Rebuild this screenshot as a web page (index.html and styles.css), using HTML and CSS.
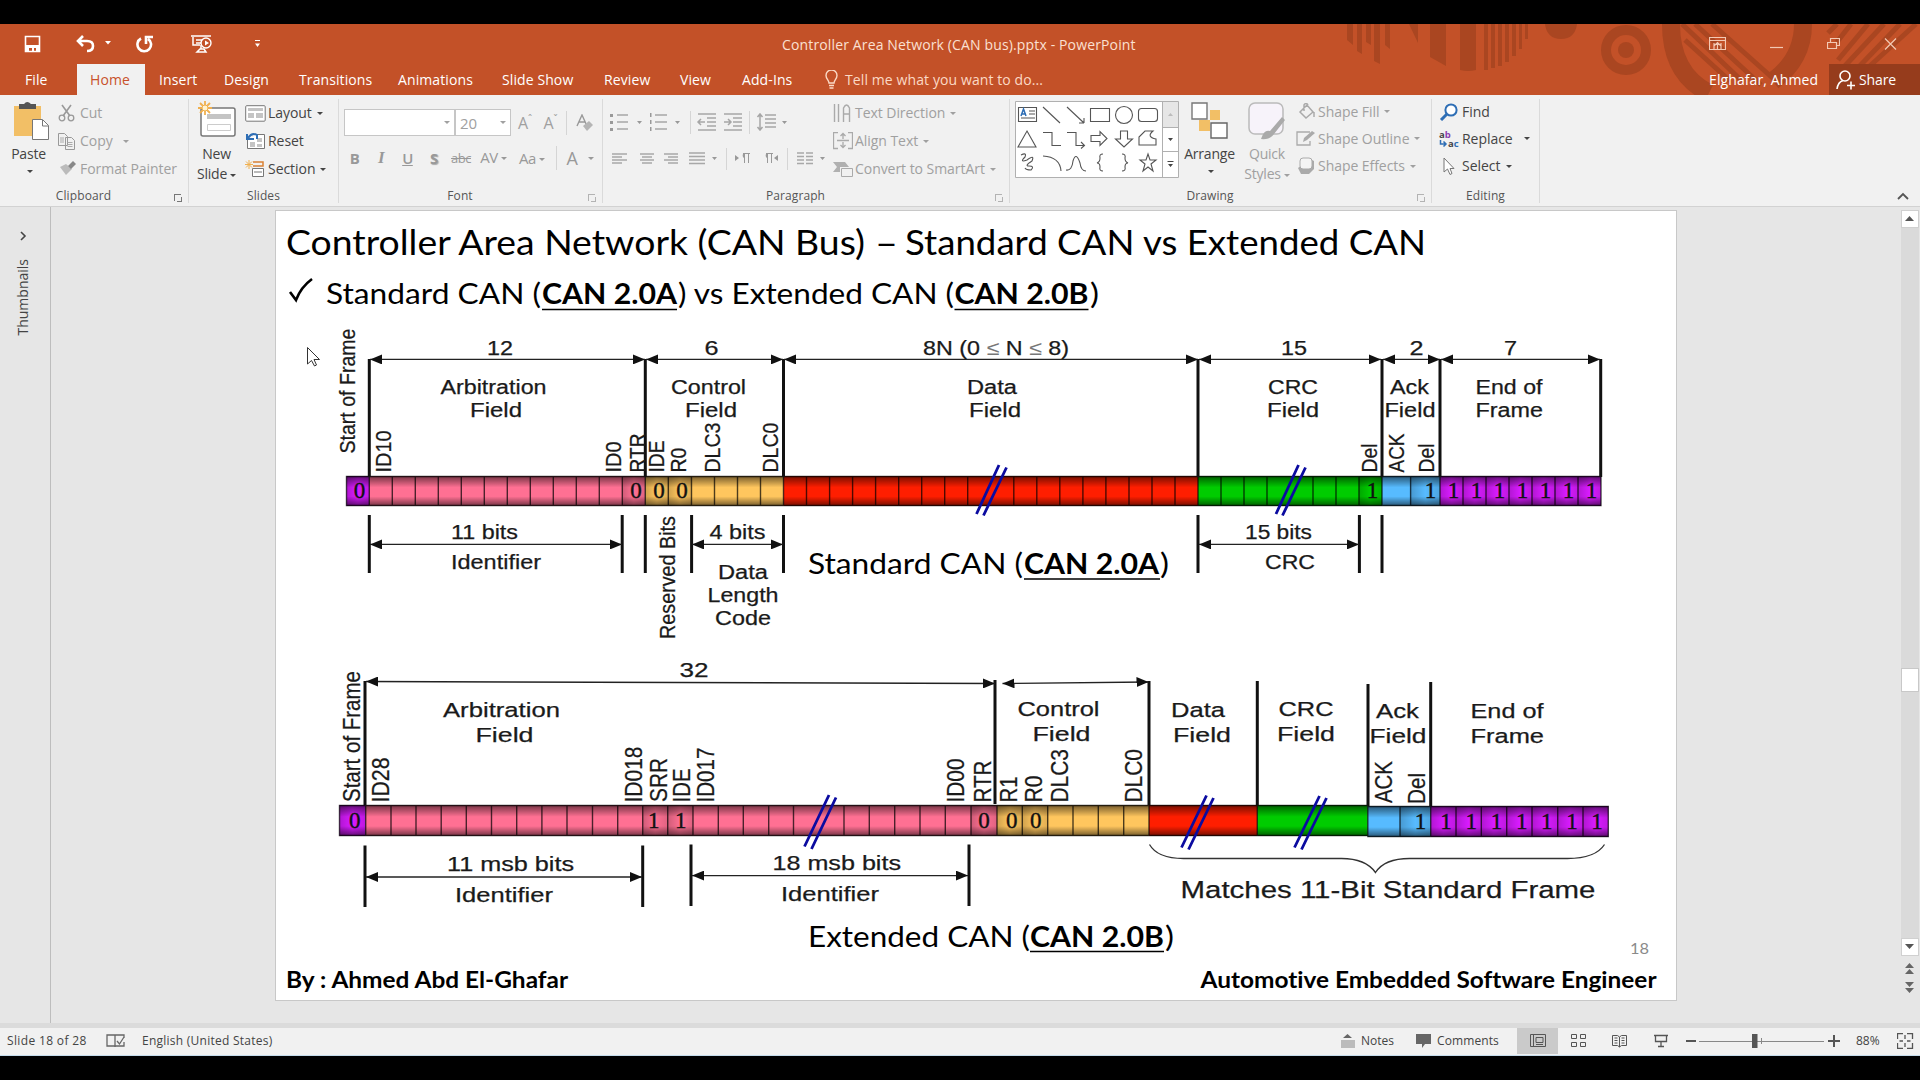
FILE: index.html
```html
<!DOCTYPE html>
<html lang="en">
<head>
<meta charset="utf-8">
<title>Controller Area Network (CAN bus).pptx - PowerPoint</title>
<link rel="stylesheet" href="styles.css">
</head>
<body>
<div class="window">
<header class="titlebar">
  <svg class="deco" width="600" height="71" viewBox="1320 24 600 71">
    <g fill="#aa4621">
      <path d="M1347 24h6v21l-6-5zM1357 24h5v30l-5-3zM1366 24h5v21l-5-3zM1374 24h6v40l-6-3zM1385 24h5v25l-5-4zM1409 24h9v19zM1430 24h16v42l-16-9zM1460 24h16v46q-8 2-16 0zM1484 24h4v46h-4zM1491 24h4v44h-4zM1498 24h4v42h-4zM1505 24h4v38h-4zM1512 24h4v32h-4zM1519 24h3v25h-3zM1525 24h3v15h-3z"/>
      <path d="M1545 24h32q-2 15-16 15t-16-15z"/><circle cx="1626" cy="50" r="8"/>
    </g>
    <circle cx="1626" cy="50" r="20" fill="none" stroke="#aa4621" stroke-width="10"/>
    <path d="M1671 24q0 50 38 69M1803 24q0 35-30 57" fill="none" stroke="#aa4621" stroke-width="18"/>
    <path d="M1682 24l60 57M1695 24l66 61M1712 24l64 57M1685 40l45 41M1837 24l-9 9M1851 24l-14 18M1868 24l-30 36M1884 24l-42 45M1900 24l-48 50M1916 24l-55 50" stroke="#aa4621" stroke-width="5"/>
  </svg>
  <div class="caption">
    <div class="qat">
      <svg width="18" height="18" viewBox="0 0 18 18"><path d="M1.500 1.500h14v15h-14z" fill="none" stroke="#fff" stroke-width="1.600"/><path d="M2 10h13v6h-3v-3h-2v3h-2v-3h-3v3h-3z" fill="#fff"/></svg>
      <svg width="40" height="18" viewBox="0 0 40 18"><path d="M7 1L2 6l5 5M3 6h8q6 0 6 5t-6 5" fill="none" stroke="#fff" stroke-width="2.600"/><path d="M29 6h6l-3 3.500z" fill="#fff"/></svg>
      <svg width="18" height="18" viewBox="0 0 18 18"><path d="M5 3.500A6.800 6.800 0 1 0 12 3.800M10 9V2h7" fill="none" stroke="#fff" stroke-width="2.600"/></svg>
      <svg width="22" height="20" viewBox="0 0 22 20"><path d="M0 2h20M2 3v8h7M5 6h6v3H5M10 11v4M6 18h9l-2-3H9z" fill="none" stroke="#fff" stroke-width="1.500"/><circle cx="15" cy="9" r="5" fill="#c35128" stroke="#fff" stroke-width="1.400"/><path d="M14 6.500v5l4-2.500z" fill="#fff"/></svg>
      <svg width="8" height="10" viewBox="0 0 8 10"><path d="M1 1.500h5" stroke="#fff"/><path d="M1 4.500h5L3.500 8z" fill="#fff"/></svg>
    </div>
    <div class="doc-title">Controller Area Network (CAN bus).pptx - PowerPoint</div>
    <div class="win-buttons">
      <svg width="17" height="14" viewBox="0 0 17 14"><path d="M.5.5h16v12H.5zM.5 3.500h16M8.500 12V6M5.500 8.500l3-3 3 3M5 6v6M12 6v6"/></svg>
      <svg width="13" height="14" viewBox="0 0 13 14"><path d="M0 10.500h13"/></svg>
      <svg width="13" height="14" viewBox="0 0 13 14"><path d="M.5 5.500h9v6h-9zM3.500 5V1.500h9v7H10"/></svg>
      <svg width="13" height="14" viewBox="0 0 13 14"><path d="M1 1.500l11 11M12 1.500l-11 11"/></svg>
    </div>
  </div>
  <nav class="tabs">
    <span class="tab file">File</span><span class="tab active">Home</span><span class="tab w65">Insert</span><span class="tab w75">Design</span><span class="tab w99">Transitions</span><span class="tab w104">Animations</span><span class="tab w102">Slide Show</span><span class="tab w76">Review</span><span class="tab w61">View</span><span class="tab w82">Add-Ins</span>
    <span class="tell"><svg width="14" height="19" viewBox="0 0 14 19"><path d="M4 13c0-3-3-4-3-7.500a5.500 5.500 0 0 1 11 0C12 9 9 10 9 13zM4 15.500h5M4.500 18h4" fill="none" stroke="#fbd9c5" stroke-width="1.400"/></svg>Tell me what you want to do...</span>
    <span class="user">Elghafar, Ahmed</span>
    <span class="share"><svg width="20" height="20" viewBox="0 0 20 20"><circle cx="9" cy="6" r="5" fill="none" stroke="#fff" stroke-width="1.600"/><path d="M1 19q1-7 6-8.500M11 15.500h8M15 11.500v8" fill="none" stroke="#fff" stroke-width="1.600"/></svg>Share</span>
  </nav>
</header>

<section class="ribbon">
  <div class="group clipboard">
    <div class="body">
      <div class="big dark"><svg width="36" height="38" viewBox="0 0 36 38"><path d="M0 4h27v30H0z" fill="#f2bf66"/><path d="M5 7V2h5q3-4 7 0h5v5z" fill="#555"/><path d="M18.500 17.500h10l6 6v14h-16z" fill="#fff" stroke="#777"/><path d="M28.500 18v6h6" fill="none" stroke="#777"/></svg><span>Paste</span><i class="caret"></i></div>
      <div class="stack">
        <div class="cmd"><svg width="20" height="18" viewBox="0 0 20 18"><path d="M4 1l8 11M13 1L5 12" stroke="#999" stroke-width="1.600"/><circle cx="4" cy="14" r="2.800" fill="none" stroke="#999" stroke-width="1.300"/><circle cx="13" cy="14" r="2.800" fill="none" stroke="#999" stroke-width="1.300"/></svg>Cut</div>
        <div class="cmd"><svg width="20" height="18" viewBox="0 0 20 18"><path d="M.5 1.500h6l3 3v9h-9zM7.500 5.500h6l3 3v9h-9z" fill="#f1f1f1" stroke="#999"/><path d="M2 6h4M2 8h4M2 10h4M9.500 10.500h5M9.500 12.500h5M9.500 14.500h5" stroke="#aaa"/></svg>Copy<i class="caret far"></i></div>
        <div class="cmd"><svg width="20" height="18" viewBox="0 0 20 18"><path d="M2 7l6-3 6 5-6 6z" fill="#bbb"/><path d="M10 6l5-5 3 3-5 5z" fill="#888"/></svg>Format Painter</div>
      </div>
    </div>
    <div class="name with-launch">Clipboard<i class="launch"></i></div>
  </div>
  <div class="group slides">
    <div class="body">
      <div class="big dark"><svg width="40" height="38" viewBox="0 0 40 38"><rect x="4" y="8" width="34" height="28" rx="2" fill="#fff" stroke="#777" stroke-width="1.500"/><path d="M10 14h24v5H10z" fill="#c4c4c4"/><path d="M10.500 24.500h23v6h-23z" fill="none" stroke="#ccc"/><path d="M8 1v14M1 8h14M3 3l10 10M13 3L3 13" stroke="#f0b04f" stroke-width="1.800"/><circle cx="8" cy="8" r="3" fill="#fff3d0" stroke="#f0b04f"/></svg><span>New</span><span>Slide<i class="caret"></i></span></div>
      <div class="stack dark">
        <div class="cmd"><svg width="21" height="17" viewBox="0 0 21 17"><rect x=".7" y=".7" width="19.500" height="15.500" rx="1" fill="#fff" stroke="#777"/><path d="M3 3h15v3H3zM3 8h6v5H3zM11 8h7v5h-7z" fill="#c4c4c4"/></svg>Layout<i class="caret"></i></div>
        <div class="cmd"><svg width="21" height="18" viewBox="0 0 21 18"><path d="M2.500 8v8.500h17v-14H12" fill="#fff" stroke="#777"/><path d="M5 10h5v5H5zM12 6h5v4h-5zM12 12h5v3h-5z" fill="#c4c4c4"/><path d="M2 8V2M2 7h7M3 6q4-6 9-3v4" fill="none" stroke="#2e6eb5" stroke-width="2"/></svg>Reset</div>
        <div class="cmd"><svg width="21" height="18" viewBox="0 0 21 18"><path d="M8 2h10v4H8" fill="none" stroke="#d98032" stroke-width="1.500"/><path d="M7.500 8.500h11v8h-11zM9 12h8" fill="#fff" stroke="#777"/><path d="M4 0v9M0 4.500h8M1 1.500l6 6M7 1.500l-6 6" stroke="#f0b04f"/></svg>Section<i class="caret"></i></div>
      </div>
    </div>
    <div class="name">Slides</div>
  </div>
  <div class="group font">
    <div class="body rows">
      <div class="frow1"><span class="combo wide"><i class="caret"></i></span><span class="combo">20<i class="caret"></i></span><span class="gl">A<sup>ˆ</sup></span><span class="gl">A<sup>ˇ</sup></span><i class="sep"></i><svg width="18" height="18" viewBox="0 0 18 18"><path d="M1 12L6 1l5 11M3 8h6" fill="none" stroke="#999" stroke-width="1.400"/><path d="M7 12l6-5 4 4-6 6z" fill="#b5b5b5"/></svg></div>
      <div class="frow2"><b>B</b><em>I</em><u>U</u><b class="shadow">S</b><s>abc</s><span class="av">AV<i class="caret"></i></span><span>Aa<i class="caret"></i></span><i class="sep"></i><span class="fc">A</span><i class="caret"></i></div>
    </div>
    <div class="name with-launch">Font<i class="launch pale"></i></div>
  </div>
  <div class="group para">
    <div class="body">
      <div class="rows">
        <svg class="prow" width="218" height="26" viewBox="608 109 218 26"><g stroke="#a6a6a6" stroke-width="1.500" fill="none"><path d="M617 115h11M617 122h11M617 129h11M655 115h12M655 122h12M655 129h12M698 114h18M707 118h9M707 122h9M707 126h9M698 130h18M724 114h18M733 118h9M733 122h9M733 126h9M724 130h18M765 115h11M765 119h11M765 123h11M765 127h11M760 115v14M757.500 117l2.500-3 2.500 3M757.500 127l2.500 3 2.500-3M705 122h-7M701 119l-3 3 3 3M724 122h7M728 119l3 3-3 3"/></g><path d="M610 114h3v3h-3zM610 121h3v3h-3zM610 128h3v3h-3zM650 113h1.500v4H650zM650 120h1.500v4H650zM650 127h1.500v4H650zM637 121h5l-2.500 3zM675 121h5l-2.500 3zM782 121h5l-2.500 3z" fill="#999"/><path d="M690.500 111v23M749.500 111v23" stroke="#d5d5d5"/></svg>
        <svg class="prow" width="218" height="26" viewBox="608 146 218 26"><path d="M612 154h15M612 157h10M612 160h15M612 163h10M640 154h14M642 157h10M640 160h14M642 163h10M664 154h14M668 157h10M664 160h14M668 163h10M689 153h16M689 156.500h16M689 160h16M689 163.500h16M797 153h7M797 156.500h7M797 160h7M797 163.500h7M806 153h7M806 156.500h7M806 160h7M806 163.500h7" stroke="#a8a8a8" stroke-width="1.500"/><path d="M735 155v6l4-3zM778 155v6l-4-3zM712 157h5l-2.500 3zM820 157h5l-2.500 3zM744 153v5a3 3 0 0 1 0-5zM767 153v5a3 3 0 0 1 0-5z" fill="#999"/><path d="M744.500 153v10M748.500 153v10M743 153.500h7M767.500 153v10M771.500 153v10M766 153.500h7" stroke="#999"/><path d="M726.500 148v22M787.500 148v22" stroke="#d5d5d5"/></svg>
      </div>
      <div class="stack">
        <div class="cmd"><svg width="20" height="20" viewBox="0 0 20 20"><path d="M1.500 1v18M5.500 1v18M10.500 19V5q3-6 6 0v14M10.500 11h6" fill="none" stroke="#aaa" stroke-width="1.400"/></svg>Text Direction<i class="caret"></i></div>
        <div class="cmd"><svg width="20" height="18" viewBox="0 0 20 18"><path d="M5 .5H.5v16H5M15 .5h4.500v16H15M4 8.500h12M10 1v6M10 10v6M7.500 4L10 1.500 12.500 4M7.500 13l2.500 2.500 2.500-2.500" fill="none" stroke="#aaa" stroke-width="1.300"/></svg>Align Text<i class="caret"></i></div>
        <div class="cmd"><svg width="20" height="18" viewBox="0 0 20 18"><path d="M0 2h12l4 5H7v5H0l4-5z" fill="#b0b0b0"/><path d="M8.500 8.500h11v8h-11z" fill="#f1f1f1" stroke="#aaa"/></svg>Convert to SmartArt<i class="caret"></i></div>
      </div>
    </div>
    <div class="name with-launch">Paragraph<i class="launch pale"></i></div>
  </div>
  <div class="group drawing">
    <div class="body">
      <svg class="gallery" width="165" height="77" viewBox="1015 101 165 77"><path d="M1015.500 101.500h163v76h-163z" fill="#fff" stroke="#b0b0b0"/><path d="M1162 102h16v25h-16z" fill="#e6e6e6"/><path d="M1162.500 101v77M1162 127.500h17M1162 151.500h17" stroke="#b0b0b0"/><path d="M1168 116h5l-2.500-3z" fill="#bbb"/><path d="M1168 138h5l-2.500 3zM1168 164h5l-2.500 3z" fill="#444"/><path d="M1167.500 161.500h6" stroke="#444"/>
        <g fill="none" stroke="#555" stroke-width="1.100"><path d="M1018.500 107.500h18v14h-18zM1029 111h6M1029 114h6M1021 118h14M1043 107l17 16M1067 107l17 16M1084 123h-5M1084 123v-5M1090.500 108.500h19v13h-19z"/><circle cx="1124" cy="115" r="8.500"/><rect x="1138.500" y="108.500" width="19" height="13" rx="3"/><path d="M1027 131l9 16h-18zM1043 132.500h9v13h9M1067 132.500h9v13h8M1081 142l3.500 3.500-3.500 3M1091 135.500h9v-4l7 7-7 7v-4h-9zM1120.500 131v8h-5l8.500 8 8.500-8h-5v-8zM1139 145v-8l6-6h8q-7 6 3 8v6zM1021 155q6-3 4 2-6 6 2 3 8-6 5 1-8 5-3 5 6 0 2 4-5 0-6-2M1043 156q17 1 18 15M1066 170q6 1 7-9 3-10 7 2 1 8 6 8M1103 154q-4 0-3 4 0 4-3 5 3 0 3 4-1 4 3 4M1122 154q4 0 3 4 0 4 3 5-3 0-3 4 1 4-3 4M1148 154l2 6h6l-5 4 2 7-5-4-5 4 2-7-5-4h6z"/></g><path d="M1021 116l2.500-7 2.500 7M1022 114h4" stroke="#2e6eb5" fill="none" stroke-width="1.500"/></svg>
      <div class="big dark arrange"><svg width="38" height="38" viewBox="0 0 38 38"><path d="M19 8h10v10H19zM8 18h11v11H8z" fill="#f2bf66"/><path d="M1 1h15v16H1z" fill="#fff" stroke="#777" stroke-width="1.400"/><path d="M20 21h16v15H20z" fill="#fff" stroke="#666" stroke-width="1.400"/></svg><span>Arrange</span><i class="caret"></i></div>
      <div class="big quick"><svg width="38" height="38" viewBox="0 0 38 38"><rect x="1" y="1" width="34" height="31" rx="6" fill="#f7f3fa" stroke="#bbb" stroke-width="1.500"/><path d="M13 37q3-10 9-8l12-14 3 3-11 14q-4 6-13 5z" fill="#aaa"/></svg><span>Quick</span><span>Styles<i class="caret"></i></span></div>
      <div class="stack">
        <div class="cmd"><svg width="20" height="18" viewBox="0 0 20 18"><path d="M4 9l7-7 6 7-7 6zM8 8V2q2-3 4 0M18 9v5" fill="none" stroke="#aaa" stroke-width="1.500"/></svg>Shape Fill<i class="caret"></i></div>
        <div class="cmd"><svg width="20" height="18" viewBox="0 0 20 18"><path d="M14 2H1v13h13v-4" fill="none" stroke="#aaa" stroke-width="1.300"/><path d="M7 12l1-4 8-7 3 2-8 7z" fill="#aaa"/></svg>Shape Outline<i class="caret"></i></div>
        <div class="cmd"><svg width="20" height="18" viewBox="0 0 20 18"><path d="M2 11l3 6h8l5-5V4l-4-2z" fill="#aaa"/><rect x="4" y="1" width="12" height="11" rx="3" fill="#f4f4f4" stroke="#aaa"/></svg>Shape Effects<i class="caret"></i></div>
      </div>
    </div>
    <div class="name with-launch">Drawing<i class="launch pale"></i></div>
  </div>
  <div class="group editing">
    <div class="body">
      <div class="stack dark">
        <div class="cmd"><svg width="20" height="18" viewBox="0 0 20 18"><circle cx="12" cy="7" r="5.600" fill="#fff" stroke="#2e6eb5" stroke-width="2"/><path d="M8 11l-6 6" stroke="#2e6eb5" stroke-width="3"/></svg>Find</div>
        <div class="cmd"><svg class="swap" width="20" height="20" viewBox="0 0 20 20"><text x="0" y="9" class="abac">a<tspan fill="#8a3fb0">b</tspan></text><text x="9" y="18" class="abac">a<tspan fill="#2e6eb5">c</tspan></text><path d="M1.500 11v4h5M4.500 12.500L7 15l-2.500 2.500" fill="none" stroke="#2e6eb5" stroke-width="1.500"/></svg>Replace<i class="caret far"></i></div>
        <div class="cmd"><svg width="20" height="18" viewBox="0 0 20 18"><path d="M5 1v14l3.500-3 2.500 5.500 2-1-2-5h4z" fill="#fff" stroke="#777"/></svg>Select<i class="caret"></i></div>
      </div>
    </div>
    <div class="name">Editing</div>
  </div>
  <svg class="collapse" width="12" height="8" viewBox="0 0 12 8"><path d="M1 7l5-5 5 5" fill="none" stroke="#555" stroke-width="1.800"/></svg>
</section>

<main class="work">
  <aside class="thumbs"><svg width="8" height="10" viewBox="0 0 8 10"><path d="M2 1l4 4-4 4" fill="none" stroke="#444" stroke-width="1.600"/></svg><span>Thumbnails</span></aside>
  <div class="stage">
  <svg class="slide" width="1400" height="789" viewBox="276 211 1400 789">
    <defs>
      <linearGradient id="shade" x1="0" y1="0" x2="0" y2="1"><stop offset="0" stop-color="#000" stop-opacity=".55"/><stop offset=".38" stop-color="#000" stop-opacity="0"/><stop offset=".68" stop-color="#000" stop-opacity="0"/><stop offset="1" stop-color="#000" stop-opacity=".55"/></linearGradient>
      <linearGradient id="side" x1="0" y1="0" x2="1" y2="0"><stop offset="0" stop-color="#000" stop-opacity=".18"/><stop offset=".5" stop-color="#000" stop-opacity="0"/><stop offset="1" stop-color="#000" stop-opacity=".12"/></linearGradient>
      <marker id="tip" markerUnits="userSpaceOnUse" markerWidth="12" markerHeight="10" refX="12" refY="5" orient="auto-start-reverse"><path d="M0 0l12 5-12 5z" fill="#111"/></marker>
    </defs>
    <g class="calibri">
      <g font-size="35"><text x="286" y="254.700" textLength="579" lengthAdjust="spacingAndGlyphs">Controller Area Network (CAN Bus)</text><text x="875" y="254.700" textLength="23" lengthAdjust="spacingAndGlyphs">–</text><text x="905" y="254.700" textLength="521" lengthAdjust="spacingAndGlyphs">Standard CAN vs Extended CAN</text></g>
      <path d="M290 292l6 8q5-13 16-21" fill="none" stroke="#000" stroke-width="2.600"/>
      <g font-size="28.500">
        <text x="326" y="304" textLength="215" lengthAdjust="spacingAndGlyphs">Standard CAN (</text><text class="b" x="542" y="304" textLength="135" lengthAdjust="spacingAndGlyphs">CAN 2.0A</text><text x="678" y="304" textLength="276" lengthAdjust="spacingAndGlyphs">) vs Extended CAN (</text><text class="b" x="954.500" y="304" textLength="134" lengthAdjust="spacingAndGlyphs">CAN 2.0B</text><text x="1090" y="304" textLength="9" lengthAdjust="spacingAndGlyphs">)</text>
        <text x="808" y="573.500" textLength="215" lengthAdjust="spacingAndGlyphs">Standard CAN (</text><text class="b" x="1024" y="573.500" textLength="135" lengthAdjust="spacingAndGlyphs">CAN 2.0A</text><text x="1160" y="573.500" textLength="9" lengthAdjust="spacingAndGlyphs">)</text>
        <text x="808" y="946.500" textLength="222" lengthAdjust="spacingAndGlyphs">Extended CAN (</text><text class="b" x="1030" y="946.500" textLength="134" lengthAdjust="spacingAndGlyphs">CAN 2.0B</text><text x="1165" y="946.500" textLength="9" lengthAdjust="spacingAndGlyphs">)</text>
      </g>
      <path d="M542 309.500h135M954.500 309.500h134M1024 579h136M1030 951.500h134" stroke="#000" stroke-width="1.700"/>
      <text class="b" x="286" y="987.500" font-size="22.500" textLength="282" lengthAdjust="spacingAndGlyphs">By : Ahmed Abd El-Ghafar</text>
      <text class="b" x="1200.500" y="987.500" font-size="22.500" textLength="456" lengthAdjust="spacingAndGlyphs">Automotive Embedded Software Engineer</text>
      <text x="1630" y="953.500" font-size="15.500" textLength="19" lengthAdjust="spacingAndGlyphs" fill="#8a8a8a">18</text>
    </g>

    <!-- standard frame -->
    <g>
      <path d="M346.500 476h23v30h-23z" fill="#d81bff"/><path d="M369.300 476h276v30h-276z" fill="#ff7093"/><path d="M645.300 476h138.200v30H645.300z" fill="#ffc65e"/><path d="M783.500 476H1198v30H783.500z" fill="#ff1e00"/><path d="M1198 476h184v30h-184z" fill="#00cc00"/><path d="M1382 476h58v30h-58z" fill="#57bbff"/><path d="M1440 476h161v30h-161z" fill="#d81bff"/>
      <path d="M346.500 476H1601v30H346.500z" fill="url(#shade)"/>
      <g fill="url(#side)"><path d="M346.500 476h23v30h-23z"/><path d="M622.300 476h23v30h-23z"/><path d="M645.300 476h23v30h-23z"/><path d="M668.300 476h23v30h-23z"/><path d="M1359 476h23v30h-23z"/><path d="M1410.600 476H1440v30h-29.400z"/><path d="M1440 476h23v30h-23z"/><path d="M1463 476h23v30h-23z"/><path d="M1486 476h23v30h-23z"/><path d="M1509 476h23v30h-23z"/><path d="M1532 476h23v30h-23z"/><path d="M1555 476h23v30h-23z"/><path d="M1578 476h23v30h-23z"/></g>
      <path class="cell" d="M346.500 476.500H1601v29H346.500zM369.300 476v30M392.300 476v30M415.300 476v30M438.300 476v30M461.300 476v30M484.300 476v30M507.300 476v30M530.300 476v30M553.300 476v30M576.300 476v30M599.300 476v30M622.300 476v30M645.300 476v30M668.300 476v30M691.500 476v30M714.500 476v30M737.500 476v30M760.500 476v30M783.500 476v30M806.500 476v30M829.600 476v30M852.600 476v30M875.600 476v30M898.700 476v30M921.700 476v30M944.700 476v30M967.700 476v30M1013.800 476v30M1036.800 476v30M1059.800 476v30M1082.900 476v30M1105.900 476v30M1129 476v30M1152 476v30M1175 476v30M1198 476v30M1221 476v30M1244 476v30M1267 476v30M1313 476v30M1336 476v30M1359 476v30M1382 476v30M1410.600 476v30M1440 476v30M1463 476v30M1486 476v30M1509 476v30M1532 476v30M1555 476v30M1578 476v30"/>
      <path class="post" d="M369.300 359v118M645.300 359v118M783.500 359v118M1198 359v118M1382 359v118M1440 359v118M1600.700 359v118M369.300 515v58M622.200 515v58M645.300 515v58M691.600 515v58M783.500 515v58M1198 515v58M1359.400 515v58M1382 515v58"/>
      <g class="dim"><path d="M370 359.400h275"/><path d="M646 359.400h137"/><path d="M784 359.400h414"/><path d="M1199 359.400h182"/><path d="M1383 359.400h57"/><path d="M1441 359.400h159"/><path d="M370 544.400h252"/><path d="M692 544.400h91"/><path d="M1199 544.400h160"/></g>
      <path class="cut" d="M999 465l-22.500 49M1006.500 467.500l-23 48M1298.500 465l-22.500 49M1305.500 467.500l-23 48"/>
    </g>
    <g class="arial">
      <text x="487" y="354.500" textLength="26" lengthAdjust="spacingAndGlyphs">12</text><text x="704.500" y="354.500" textLength="14" lengthAdjust="spacingAndGlyphs">6</text><text x="923" y="354.500" textLength="146" lengthAdjust="spacingAndGlyphs">8N (0 <tspan class="thin">≤</tspan> N <tspan class="thin">≤</tspan> 8)</text><text x="1281" y="354.500" textLength="26" lengthAdjust="spacingAndGlyphs">15</text><text x="1409.500" y="354.500" textLength="14" lengthAdjust="spacingAndGlyphs">2</text><text x="1504" y="354.500" textLength="13" lengthAdjust="spacingAndGlyphs">7</text>
      <text x="440.500" y="393.500" textLength="106" lengthAdjust="spacingAndGlyphs">Arbitration</text><text x="470" y="416.500" textLength="52" lengthAdjust="spacingAndGlyphs">Field</text>
      <text x="671" y="393.500" textLength="75" lengthAdjust="spacingAndGlyphs">Control</text><text x="685" y="416.500" textLength="52" lengthAdjust="spacingAndGlyphs">Field</text>
      <text x="967" y="393.500" textLength="50" lengthAdjust="spacingAndGlyphs">Data</text><text x="969" y="416.500" textLength="52" lengthAdjust="spacingAndGlyphs">Field</text>
      <text x="1268" y="393.500" textLength="50" lengthAdjust="spacingAndGlyphs">CRC</text><text x="1267" y="416.500" textLength="52" lengthAdjust="spacingAndGlyphs">Field</text>
      <text x="1390" y="393.500" textLength="39" lengthAdjust="spacingAndGlyphs">Ack</text><text x="1384.500" y="416.500" textLength="51" lengthAdjust="spacingAndGlyphs">Field</text>
      <text x="1475.500" y="393.500" textLength="67" lengthAdjust="spacingAndGlyphs">End of</text><text x="1475.500" y="416.500" textLength="67.500" lengthAdjust="spacingAndGlyphs">Frame</text>
      <text x="451" y="539.300" textLength="67" lengthAdjust="spacingAndGlyphs">11 bits</text><text x="451" y="569" textLength="90" lengthAdjust="spacingAndGlyphs">Identifier</text>
      <text x="709.500" y="539.300" textLength="56" lengthAdjust="spacingAndGlyphs">4 bits</text><text x="718" y="578.700" textLength="50" lengthAdjust="spacingAndGlyphs">Data</text><text x="707.500" y="602.300" textLength="71" lengthAdjust="spacingAndGlyphs">Length</text><text x="715" y="625.300" textLength="56" lengthAdjust="spacingAndGlyphs">Code</text>
      <text x="1245" y="539.300" textLength="67" lengthAdjust="spacingAndGlyphs">15 bits</text><text x="1265" y="569" textLength="50" lengthAdjust="spacingAndGlyphs">CRC</text>
    </g>
    <g class="arial up">
      <text transform="translate(355 453.500) rotate(-90)" textLength="125" lengthAdjust="spacingAndGlyphs">Start of Frame</text>
      <text transform="translate(390.500 472.500) rotate(-90)" textLength="42" lengthAdjust="spacingAndGlyphs">ID10</text><text transform="translate(621 472.500) rotate(-90)" textLength="31" lengthAdjust="spacingAndGlyphs">ID0</text><text transform="translate(644.500 472.500) rotate(-90)" textLength="39" lengthAdjust="spacingAndGlyphs">RTR</text><text transform="translate(663.500 472.500) rotate(-90)" textLength="32" lengthAdjust="spacingAndGlyphs">IDE</text><text transform="translate(685.500 472.500) rotate(-90)" textLength="25" lengthAdjust="spacingAndGlyphs">R0</text><text transform="translate(720 472.500) rotate(-90)" textLength="50" lengthAdjust="spacingAndGlyphs">DLC3</text><text transform="translate(777.500 472.500) rotate(-90)" textLength="50" lengthAdjust="spacingAndGlyphs">DLC0</text>
      <text transform="translate(1376.500 472.500) rotate(-90)" textLength="29" lengthAdjust="spacingAndGlyphs">Del</text><text transform="translate(1404 472.500) rotate(-90)" textLength="39" lengthAdjust="spacingAndGlyphs">ACK</text><text transform="translate(1433.500 472.500) rotate(-90)" textLength="29" lengthAdjust="spacingAndGlyphs">Del</text>
      <text transform="translate(674.500 639) rotate(-90)" textLength="123" lengthAdjust="spacingAndGlyphs">Reserved Bits</text>
    </g>
    <g class="bit">
      <text x="359.500" y="498">0</text><text x="636" y="498">0</text><text x="659" y="498">0</text><text x="682" y="498">0</text><text x="1372.500" y="498">1</text><text x="1430.500" y="498">1</text><text x="1453.500" y="498">1</text><text x="1476.500" y="498">1</text><text x="1499.500" y="498">1</text><text x="1522.500" y="498">1</text><text x="1545.500" y="498">1</text><text x="1568.500" y="498">1</text><text x="1591.500" y="498">1</text>
    </g>

    <!-- extended frame -->
    <g>
      <path d="M339.500 805h26.200v31h-26.200z" fill="#d81bff"/><path d="M365.700 805H997v31H365.700z" fill="#ff7093"/><path d="M997 805h152v31H997z" fill="#ffc65e"/><path d="M1149 805h108.300v31H1149z" fill="#ff1e00"/><path d="M1257.300 805h110.500v31h-110.500z" fill="#00cc00"/><path d="M1367.800 806h63v31h-63z" fill="#57bbff"/><path d="M1430.700 806h177.600v31h-177.600z" fill="#d81bff"/>
      <path d="M339.500 805h1028.300v31H339.500z" fill="url(#shade)"/><path d="M1367.800 806h240.500v31h-240.500z" fill="url(#shade)"/>
      <g fill="url(#side)"><path d="M339.500 805h26v31h-26z"/><path d="M642.700 805h25v31h-25z"/><path d="M667.700 805h25.300v31h-25.300z"/><path d="M971 805h26v31h-26z"/><path d="M997 805h25.300v31H997z"/><path d="M1022.300 805h25.400v31h-25.400z"/><path d="M1400 806h30.700v31H1400z"/><path d="M1430.700 806h25.300v31h-25.300z"/><path d="M1456 806h25.300v31H1456z"/><path d="M1481.300 806h25.400v31h-25.400z"/><path d="M1506.700 806h25.300v31h-25.300z"/><path d="M1532 806h25.700v31H1532z"/><path d="M1557.700 806h25.300v31h-25.300z"/><path d="M1583 806h25.300v31H1583z"/></g>
      <path class="cell" d="M339.500 805.500h1028.300v30H339.500zM1367.800 806.500h240.500v30h-240.500zM365.700 805v31M391 805v31M416 805v31M441.200 805v31M466.300 805v31M491.500 805v31M516.700 805v31M541.900 805v31M567 805v31M592.500 805v31M617.700 805v31M642.700 805v31M667.700 805v31M693 805v31M718.300 805v31M743.300 805v31M768.700 805v31M793.500 805v31M844 805v31M869.300 805v31M894.700 805v31M920 805v31M945.300 805v31M971 805v31M997 805v31M1022.300 805v31M1047.700 805v31M1073 805v31M1098.300 805v31M1123.700 805v31M1149 805v31M1257.300 805v31M1400 806v31M1430.700 806v31M1456 806v31M1481.300 806v31M1506.700 806v31M1532 806v31M1557.700 806v31M1583 806v31"/>
      <path class="post" d="M365 681v124M995 680v124M1149 681v124M1257.300 681v124M1368 684v122M1430.700 682v124M365 845.500v61.500M642.700 845.500v61.500M691 844.500v61.500M969 844.500v61.500"/>
      <g class="dim"><path d="M366 681.500l629 2"/><path d="M1002.500 683.500l146-1.500"/><path d="M366 877h276"/><path d="M692 875.600h276"/></g>
      <path class="cut" d="M829 795l-24.500 51.500M836 797.500l-24.500 51.500M1206.500 795.500l-25 52M1213.500 798l-25 51.500M1319.500 796l-25 51.500M1326.500 798l-25 51.500"/>
      <path d="M1149.500 844.500q8 14 34 14h158q24 0 34 14 9-14 34-14h158q28 0 37-14" fill="none" stroke="#333" stroke-width="1.300"/>
    </g>
    <g class="arial ext">
      <text x="679.500" y="676.700" textLength="29" lengthAdjust="spacingAndGlyphs">32</text>
      <text x="443" y="717.200" textLength="117" lengthAdjust="spacingAndGlyphs">Arbitration</text><text x="475.500" y="741.700" textLength="58" lengthAdjust="spacingAndGlyphs">Field</text>
      <text x="1017.500" y="716" textLength="82" lengthAdjust="spacingAndGlyphs">Control</text><text x="1032.500" y="740.500" textLength="58" lengthAdjust="spacingAndGlyphs">Field</text>
      <text x="1171" y="716.500" textLength="54" lengthAdjust="spacingAndGlyphs">Data</text><text x="1173" y="741.500" textLength="58" lengthAdjust="spacingAndGlyphs">Field</text>
      <text x="1278.500" y="716" textLength="55" lengthAdjust="spacingAndGlyphs">CRC</text><text x="1277" y="740.500" textLength="58" lengthAdjust="spacingAndGlyphs">Field</text>
      <text x="1376" y="718" textLength="43" lengthAdjust="spacingAndGlyphs">Ack</text><text x="1369.500" y="742.500" textLength="57" lengthAdjust="spacingAndGlyphs">Field</text>
      <text x="1470.500" y="718" textLength="73" lengthAdjust="spacingAndGlyphs">End of</text><text x="1470.500" y="742.800" textLength="73.500" lengthAdjust="spacingAndGlyphs">Frame</text>
      <text x="447" y="871" textLength="127" lengthAdjust="spacingAndGlyphs">11 msb bits</text><text x="455" y="902.300" textLength="98" lengthAdjust="spacingAndGlyphs">Identifier</text>
      <text x="772.500" y="870" textLength="128.500" lengthAdjust="spacingAndGlyphs">18 msb bits</text><text x="781" y="901" textLength="98" lengthAdjust="spacingAndGlyphs">Identifier</text>
      <text x="1180.500" y="897.500" font-size="24.500" textLength="415" lengthAdjust="spacingAndGlyphs">Matches 11-Bit Standard Frame</text>
    </g>
    <g class="arial up ext-up">
      <text transform="translate(359.500 802) rotate(-90)" textLength="131" lengthAdjust="spacingAndGlyphs">Start of Frame</text>
      <text transform="translate(388.500 802.500) rotate(-90)" textLength="45" lengthAdjust="spacingAndGlyphs">ID28</text><text transform="translate(641.500 802.500) rotate(-90)" textLength="56" lengthAdjust="spacingAndGlyphs">ID018</text><text transform="translate(666.500 802) rotate(-90)" textLength="44" lengthAdjust="spacingAndGlyphs">SRR</text><text transform="translate(690 802.500) rotate(-90)" textLength="34" lengthAdjust="spacingAndGlyphs">IDE</text><text transform="translate(713.500 802.500) rotate(-90)" textLength="55" lengthAdjust="spacingAndGlyphs">ID017</text><text transform="translate(963.500 802.500) rotate(-90)" textLength="44" lengthAdjust="spacingAndGlyphs">ID00</text><text transform="translate(991 802.500) rotate(-90)" textLength="42" lengthAdjust="spacingAndGlyphs">RTR</text><text transform="translate(1016.500 802.500) rotate(-90)" textLength="26" lengthAdjust="spacingAndGlyphs">R1</text><text transform="translate(1041.500 802.500) rotate(-90)" textLength="27" lengthAdjust="spacingAndGlyphs">R0</text><text transform="translate(1067.500 802.500) rotate(-90)" textLength="53.500" lengthAdjust="spacingAndGlyphs">DLC3</text><text transform="translate(1142 802.500) rotate(-90)" textLength="53.500" lengthAdjust="spacingAndGlyphs">DLC0</text>
      <text transform="translate(1391.500 803) rotate(-90)" textLength="42" lengthAdjust="spacingAndGlyphs">ACK</text><text transform="translate(1424.500 804) rotate(-90)" textLength="31" lengthAdjust="spacingAndGlyphs">Del</text>
    </g>
    <g class="bit">
      <text x="354.700" y="827.500">0</text><text x="653.700" y="828">1</text><text x="680.700" y="828">1</text><text x="984" y="828">0</text><text x="1011.700" y="828">0</text><text x="1035.700" y="828">0</text><text x="1420.500" y="829">1</text><text x="1446" y="829">1</text><text x="1471.300" y="829">1</text><text x="1496.500" y="829">1</text><text x="1521.700" y="829">1</text><text x="1546.800" y="829">1</text><text x="1572" y="829">1</text><text x="1597" y="829">1</text>
    </g>
    <path d="M307.500 347.500V364l4-3.500 3 5.500 2-1-2.500-5.500h5.500z" fill="#fff" stroke="#333"/>
  </svg>
  </div>
  <div class="scroll">
    <span class="sbtn"><svg width="10" height="6"><path d="M0 5h9L4.500 0z" fill="#555"/></svg></span>
    <div class="track"><span class="thumb"></span></div>
    <span class="sbtn"><svg width="10" height="6"><path d="M0 0h9L4.500 5z" fill="#555"/></svg></span>
    <svg width="10" height="12"><path d="M0 5h9L4.500 0zM0 11h9L4.500 6z" fill="#666"/></svg>
    <svg width="10" height="12"><path d="M0 0h9L4.500 5zM0 6h9l-4.500 5z" fill="#666"/></svg>
  </div>
</main>

<footer class="status">
  <span class="slideno">Slide 18 of 28</span>
  <svg class="proof" width="19" height="16" viewBox="0 0 19 16"><path d="M9 2H1v11h8M9 2v12M9 2h9v3M9 13h9V9M11 8l2.500 3L18 4" fill="none" stroke="#666" stroke-width="1.300"/></svg>
  <span class="lang">English (United States)</span>
  <span class="notes"><svg width="15" height="14" viewBox="0 0 15 14"><path d="M0 6h14v8H0z" fill="#bbb"/><path d="M2 4h9L6.500 0z" fill="#666"/></svg>Notes</span>
  <span class="comments"><svg width="16" height="14" viewBox="0 0 16 14"><path d="M0 0h15v10H9l-3 4v-4H0z" fill="#666"/></svg>Comments</span>
  <span class="view on"><svg width="16" height="14" viewBox="0 0 16 14"><path d="M.5.500h15v12H.5zM3.500 1v11M6 3.500h7v5H6zM6 10.500h7" fill="none" stroke="#555"/></svg></span>
  <span class="view"><svg width="15" height="14" viewBox="0 0 15 14"><path d="M.5.500h5v4h-5zM9.500.500h5v4h-5zM.5 8.500h5v4h-5zM9.500 8.500h5v4h-5z" fill="none" stroke="#555"/></svg></span>
  <span class="view"><svg width="15" height="14" viewBox="0 0 15 14"><path d="M.5 1.500h5L7.500 3l2-1.500h5v10h-5L7.500 13l-2-1.500h-5zM7.500 3v10M2.500 4h3M2.500 6.500h3M2.500 9h3M9.500 4h3M9.500 6.500h3M9.500 9h3" fill="none" stroke="#555"/></svg></span>
  <span class="view"><svg width="14" height="14" viewBox="0 0 14 14"><path d="M0 1.500h14M1.500 2v5.500h11V2M7 8v4M4 12.500h6" fill="none" stroke="#555" stroke-width="1.300"/></svg></span>
  <svg class="zoom" width="158" height="14" viewBox="1686 0 158 14"><path d="M1688 7h10M1830 7h12M1836 1v12" stroke="#555" stroke-width="2"/><path d="M1701 7.500h125M1763.500 4v6" stroke="#888"/><path d="M1754 0h5.500v14h-5.500z" fill="#555"/></svg>
  <span class="pct">88%</span>
  <svg class="fit" width="17" height="16" viewBox="0 0 17 16"><path d="M6 .5H.5V6M10 .5h5.500V6M.5 10v5.500H6M15.500 10v5.500H10M8 2v4M8 10v4M2.500 8h3.500M10 8h3.500" fill="none" stroke="#555" stroke-width="1.300"/></svg>
</footer>
</div>
</body>
</html>
```
FILE: styles.css
```css
*{box-sizing:border-box}
body{margin:0;width:1920px;height:1080px;background:#000;overflow:hidden;font:14px/18px "Open Sans","Noto Sans",sans-serif;color:#444}
.window{display:flex;flex-direction:column;height:1056px;padding-top:24px}
svg{display:block;flex:none}

.titlebar{position:relative;flex:none;height:71px;background:#c35128;color:#fff}
.deco{position:absolute;top:0;right:0}
.caption{position:relative;display:flex;align-items:center;height:40px}
.qat{display:flex;align-items:center;width:782px;padding-left:24px}
.qat svg:nth-child(2){margin-left:34px}
.qat svg:nth-child(3){margin-left:20px}
.qat svg:nth-child(4){margin-left:37px}
.qat svg:nth-child(5){margin-left:41px}
.doc-title{color:#fbe0d2;white-space:nowrap;font-size:14px;letter-spacing:.14px;padding-top:2px}
.win-buttons{display:flex;gap:44px;margin-left:auto;padding-right:23px}
.win-buttons svg{fill:none;stroke:#f3c9b4;stroke-width:1.2}
.tabs{position:relative;display:flex;height:31px;line-height:31px;white-space:nowrap;letter-spacing:.1px}
.file{width:77px;padding-left:25px}
.active{width:68px;padding-left:13px;margin-right:14px;background:#f1f1f1;color:#c8512b}
.w65{width:65px}.w75{width:75px}.w99{width:99px}.w104{width:104px}.w102{width:102px}.w76{width:76px}.w61{width:62px}.w82{width:83px}
.tell{display:flex;align-items:center;gap:6px;color:#fbd9c5;letter-spacing:.1px}
.user{margin-left:auto;width:120px;letter-spacing:.1px}
.share{display:flex;align-items:center;gap:3px;width:91px;padding-left:7px;background:#963c1c;letter-spacing:-.1px}

.ribbon{display:flex;flex:none;height:112px;background:#f1f1f1;border-bottom:1px solid #d2d2d2;padding-top:4px;color:#a0a0a0}
.group{display:flex;flex-direction:column;height:104px;border-right:1px solid #dadada}
.body{display:flex;flex:none;height:88px}
.name{position:relative;flex:none;height:16px;font-size:12px;line-height:18px;text-align:center;color:#555;letter-spacing:.1px}
.with-launch{padding-right:21px}
.dark{color:#444}
.clipboard{width:189px}.slides{width:150px}.font{width:264px}.para{width:407px}.drawing{width:422px}.editing{width:108px}
.big{display:flex;flex-direction:column;align-items:center;padding-top:3px;line-height:20px;white-space:nowrap;letter-spacing:-.2px}
.big svg{margin-bottom:4px}
.big .caret{margin-top:6px}
.big span .caret{margin-top:0}
.clipboard .big{width:58px;padding-right:1px}
.clipboard .big svg{margin-left:6px}
.slides .big{width:56px;padding-top:1px;padding-right:1px}
.slides .big svg{margin-bottom:6px}
.stack{display:flex;flex-direction:column;white-space:nowrap;letter-spacing:-.05px}
.cmd{display:flex;align-items:center;height:28px;gap:2px}
.drawing .stack,.editing .stack{margin-top:-1px}
.drawing .cmd,.editing .cmd{height:27.3px}
.editing .cmd{gap:3px}
.caret{display:inline-block;width:0;height:0;border:3px solid transparent;border-top-color:currentColor;border-bottom:0;margin-left:3px;vertical-align:middle}
.far{margin-left:8px}
.launch{position:absolute;right:7px;top:7px;width:7px;height:7px;border-left:1px solid #777;border-top:1px solid #777}
.launch::after{content:"";position:absolute;right:-1px;bottom:-1px;width:4px;height:4px;border-right:1.5px solid #777;border-bottom:1.5px solid #777}
.pale{opacity:.5}
.rows{display:flex;flex-direction:column}
.frow1{display:grid;grid-template-columns:111px 56px 28px 23px 8px 30px;align-items:center;justify-items:center;margin:10px 0 0 5px;height:27px;font-size:16px}
.combo{display:flex;align-items:center;justify-content:space-between;width:100%;height:27px;padding:0 4px;background:#fff;border:1px solid #c6c6c6;font-size:15px}
.combo .caret{margin-left:auto}
.gl{white-space:nowrap}
.gl sup{font-size:10px;line-height:0}
.sep{width:1px;height:24px;background:#d5d5d5}
.frow2{display:grid;grid-template-columns:25px 28px 25px 28px 26px 39px 38px 10px 22px 16px;align-items:center;justify-items:center;margin:9px 0 0 3px;height:26px;font-size:15px;letter-spacing:-.5px;color:#999;white-space:nowrap}
.frow2 em{font-family:"Liberation Serif",serif;font-weight:bold;font-size:17px}
.frow2 s{font-size:13px}
.frow2 u{font-weight:600}
.shadow{text-shadow:1px 1px 1px #aaa}
.av{padding-bottom:2px}
.fc{font-size:18px}
.frow2>.caret{margin:0}
.para .rows{width:230px;padding-left:5px}
.prow{margin-top:10px}
.prow+.prow{margin-top:11px}
.gallery{margin:2px 0 0 5px}
.arrange{width:59px}
.quick{width:56px;margin-right:1px}
.editing .body{padding-left:7px}
.swap{overflow:visible}
.abac{font:bold 9.5px "Open Sans",sans-serif;fill:#444}
.collapse{margin:93px 11px 0 auto}

.work{display:flex;flex:1;background:#e6e6e6;min-height:0;border-bottom:5px solid #dbdbdb}
.thumbs{display:flex;flex-direction:column;align-items:center;width:51px;padding:24px 4px 0 0;border-right:1px solid #bdbdbd}
.thumbs span{writing-mode:vertical-rl;transform:rotate(180deg);margin-top:18px;font-size:14px;letter-spacing:0}
.stage{flex:1;padding:4px 0 0 225px}
.slide{background:#fff;outline:1px solid #c8c8c8}
.scroll{display:flex;flex-direction:column;align-items:center;width:20px;padding:3px 1px 0 0}
.sbtn{display:flex;align-items:center;justify-content:center;width:18px;height:18px;background:#fff;border:1px solid #d0d0d0}
.track{width:18px;height:710px;padding-top:440px;background:#dadada}
.thumb{display:block;height:24px;background:#fff;border:1px solid #c8c8c8}
.scroll>svg{margin-top:7px}

.calibri{font-family:Lato,sans-serif;fill:#000;font-variant-ligatures:none}
.calibri .b{font-weight:bold}
.arial{font:20px "Liberation Sans",Arial,sans-serif;fill:#1a1a1a;stroke:#1a1a1a;stroke-width:.25}
.thin{fill:#777;stroke:none}
.ext{font-size:20.5px}
.up{font-size:22.5px}
.ext-up{font-size:24px}
.bit{font:23px "Liberation Serif",serif;fill:#111;stroke:#111;stroke-width:.4;text-anchor:middle}
.cell{fill:none;stroke:#000;stroke-opacity:.7;stroke-width:1.4}
.post{stroke:#111;stroke-width:3;fill:none}
.dim path{stroke:#222;stroke-width:1.4;marker-start:url(#tip);marker-end:url(#tip)}
.cut{stroke:#0b0ba0;stroke-width:2.8;fill:none}

.status{display:flex;align-items:center;flex:none;height:28px;background:#f1f1f1;border-bottom:1px solid #c5dcec;font-size:12px;padding:0 0 2px 7px;white-space:nowrap}
.slideno{width:99px;letter-spacing:.35px}
.proof{margin-right:17px}
.lang{letter-spacing:.25px}
.notes,.comments{display:flex;align-items:center;gap:5px}
.notes{margin-left:auto;width:75px}
.comments{width:101px;letter-spacing:.1px}
.view{display:flex;align-items:center;justify-content:center;width:41px;height:26px}
.on{background:#cacaca}
.zoom{margin-left:3px}
.pct{width:41px;margin-left:14px}
.fit{margin-right:6px}
```
